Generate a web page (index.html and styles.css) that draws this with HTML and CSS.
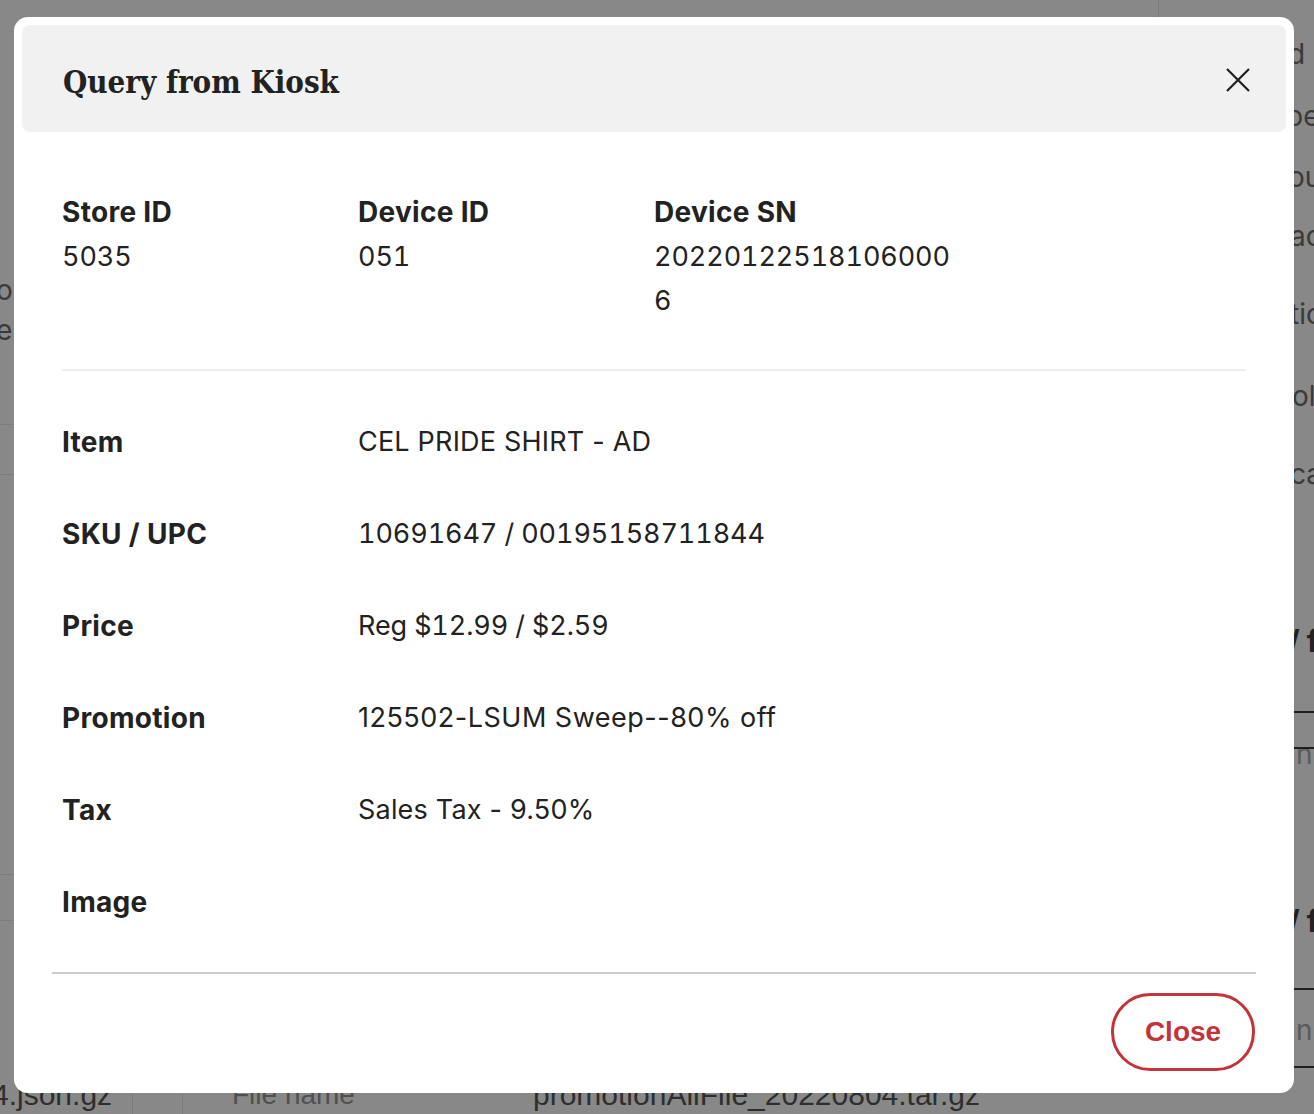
FILE: index.html
```html
<!DOCTYPE html>
<html lang="en">
<head>
<meta charset="utf-8">
<title>Query from Kiosk</title>
<link rel="stylesheet" href="styles.css">
</head>
<body>
<div class="page">
  <div class="bg-text bt1">d</div>
  <div class="bg-text bt2">pe</div>
  <div class="bg-text bt3">ou</div>
  <div class="bg-text bt4">ac</div>
  <div class="bg-text bt5">tio</div>
  <div class="bg-text bt6">ol</div>
  <div class="bg-text bt7">ca</div>
  <div class="bg-text bl1">ou</div>
  <div class="bg-text bl2">e</div>
  <div class="bg-text bh1">/ f</div>
  <div class="bg-text bh2">/ f</div>
  <div class="bg-text bn1">n</div>
  <div class="bg-text bn2">n</div>
  <div class="bg-line ll1"></div>
  <div class="bg-line ll2"></div>
  <div class="bg-line ll3"></div>
  <div class="bg-line ll4"></div>
  <div class="bg-line dark rl1"></div>
  <div class="bg-line dark rl2"></div>
  <div class="bg-line dark rl3"></div>
  <div class="bg-line dark rl4"></div>
  <div class="bg-vline vl1"></div>
  <div class="bg-vline vl2"></div>
  <div class="bg-vline vl3"></div>
  <div class="bottom-row">
    <span class="b-cell c1">4.json.gz</span>
    <span class="b-cell c2">File name</span>
    <span class="b-cell c3">promotionAllFile_20220804.tar.gz</span>
  </div>
</div>

<div class="modal">
  <div class="modal-header">
    <h1 class="modal-title">Query from Kiosk</h1>
    <button class="icon-close" aria-label="Close">
      <svg width="24" height="24" viewBox="0 0 24 24"><path d="M1 1 L23 23 M23 1 L1 23" stroke="#1f1f1f" stroke-width="2.2" fill="none"/></svg>
    </button>
  </div>
  <div class="modal-body">
    <div class="ids">
      <div class="id-col">
        <div class="label">Store ID</div>
        <div class="value">5035</div>
      </div>
      <div class="id-col">
        <div class="label">Device ID</div>
        <div class="value">051</div>
      </div>
      <div class="id-col">
        <div class="label">Device SN</div>
        <div class="value sn">202201225181060006</div>
      </div>
    </div>
    <div class="divider"></div>
    <div class="details">
      <div class="row"><div class="label">Item</div><div class="value prop">CEL PRIDE SHIRT - AD</div></div>
      <div class="row"><div class="label">SKU / UPC</div><div class="value">10691647 / 00195158711844</div></div>
      <div class="row"><div class="label">Price</div><div class="value">Reg $12.99 / $2.59</div></div>
      <div class="row"><div class="label">Promotion</div><div class="value prop wide">125502-LSUM Sweep--80% off</div></div>
      <div class="row"><div class="label">Tax</div><div class="value prop">Sales Tax - 9.50%</div></div>
      <div class="row"><div class="label">Image</div><div class="value"></div></div>
    </div>
  </div>
  <div class="modal-footer">
    <button class="btn-close">Close</button>
  </div>
</div>
</body>
</html>
```

FILE: styles.css
```css
* { box-sizing: border-box; }
html, body { margin: 0; padding: 0; }
body {
  width: 1314px;
  height: 1114px;
  overflow: hidden;
  background: #878787;
  font-family: Inter, "Noto Sans", sans-serif;
  color: #222;
}
.page {
  position: relative;
  width: 1314px;
  height: 1114px;
  background: #888888;
}
.bg-text {
  position: absolute;
  font-family: Inter, sans-serif;
  font-size: 28px;
  color: #3a3a3a;
  line-height: 1;
  white-space: nowrap;
}
.bt1 { left: 1288px; top: 40px; }
.bt2 { left: 1286px; top: 102px; }
.bt3 { left: 1288px; top: 163px; }
.bt4 { left: 1290px; top: 222px; }
.bt5 { left: 1290px; top: 300px; }
.bt6 { left: 1292px; top: 382px; }
.bt7 { left: 1290px; top: 460px; }
.bl1 { left: -4px; top: 276px; }
.bl2 { left: -4px; top: 316px; }
.bh1 { left: 1288px; top: 626px; font-weight: 700; font-size: 30px; color: #222; }
.bh2 { left: 1288px; top: 906px; font-weight: 700; font-size: 30px; color: #222; }
.bn1 { left: 1296px; top: 740px; color: #5a5a5a; }
.bn2 { left: 1296px; top: 1016px; color: #5a5a5a; }
.bg-line { position: absolute; height: 1px; background: #7c7c7c; }
.bg-line.dark { background: #1e1e1e; height: 2px; }
.ll1 { left: 0; width: 20px; top: 424px; }
.ll2 { left: 0; width: 20px; top: 474px; }
.ll3 { left: 0; width: 20px; top: 874px; }
.ll4 { left: 0; width: 20px; top: 920px; }
.rl1 { left: 1290px; width: 24px; top: 711px; }
.rl2 { left: 1290px; width: 24px; top: 747px; }
.rl3 { left: 1290px; width: 24px; top: 988px; }
.rl4 { left: 1290px; width: 24px; top: 1066px; }
.bg-vline { position: absolute; width: 1px; background: #7a7a7a; }
.vl1 { left: 1158px; top: 0; height: 17px; }
.vl2 { left: 132px; top: 1093px; height: 21px; }
.vl3 { left: 182px; top: 1093px; height: 21px; }
.bottom-row {
  position: absolute;
  left: 0; top: 1078px;
  font-family: "Liberation Sans", sans-serif;
  font-size: 30px;
  line-height: 34px;
  color: #2e2e2e;
}
.b-cell { position: absolute; top: 0; white-space: nowrap; }
.c1 { left: -8px; }
.c2 { left: 232px; color: #505050; font-size: 28px; }
.c3 { left: 533px; }

.modal {
  position: absolute;
  left: 14px;
  top: 17px;
  width: 1280px;
  height: 1076px;
  background: #fff;
  border-radius: 14px;
  padding: 8px;
  display: flex;
  flex-direction: column;
}
.modal-header {
  height: 107px;
  background: #f1f1f1;
  border-radius: 8px;
  display: flex;
  align-items: center;
  justify-content: space-between;
  padding: 0 36px 0 41px;
}
.modal-title {
  margin: 0;
  font-family: "DejaVu Serif Condensed", "DejaVu Serif", serif;
  font-stretch: condensed;
  font-weight: 700;
  font-size: 31px;
  color: #222;
  padding-top: 8px;
}
.icon-close {
  border: 0;
  background: none;
  padding: 0;
  width: 24px;
  height: 24px;
  display: flex;
  margin-top: 4px;
}
.modal-body {
  padding: 58px 40px 0 40px;
  flex: 1;
}
.ids {
  display: grid;
  grid-template-columns: 296px 296px 296px;
}
.label {
  font-weight: 700;
  font-size: 28px;
  letter-spacing: 0.3px;
  line-height: 44px;
  color: #222;
}
.value {
  font-size: 27px;
  line-height: 44px;
  color: #222;
  font-variant-numeric: tabular-nums;
  letter-spacing: -0.1px;
}
.value.prop {
  font-variant-numeric: normal;
  letter-spacing: 0.2px;
}
.value.prop.wide { letter-spacing: 0.5px; }
.ids .label { margin-bottom: 1px; }
.ids .value.sn { width: 300px; word-break: break-all; }
.divider {
  height: 2px;
  background: #eeeeee;
  margin-top: 46px;
}
.details { padding-top: 49px; }
.row {
  display: grid;
  grid-template-columns: 296px 1fr;
  height: 92px;
}
.modal-footer {
  margin: 0 30px;
  border-top: 2px solid #cccccc;
  height: 114px;
  display: flex;
  align-items: center;
  justify-content: flex-end;
  padding-right: 1px;
}
.btn-close {
  width: 144px;
  height: 78px;
  border: 3px solid #c3343a;
  border-radius: 40px;
  background: #fff;
  color: #c3343a;
  font-family: "Liberation Sans", Arial, sans-serif;
  font-weight: 700;
  font-size: 28px;
  padding: 0;
  margin-top: 6px;
}
```
